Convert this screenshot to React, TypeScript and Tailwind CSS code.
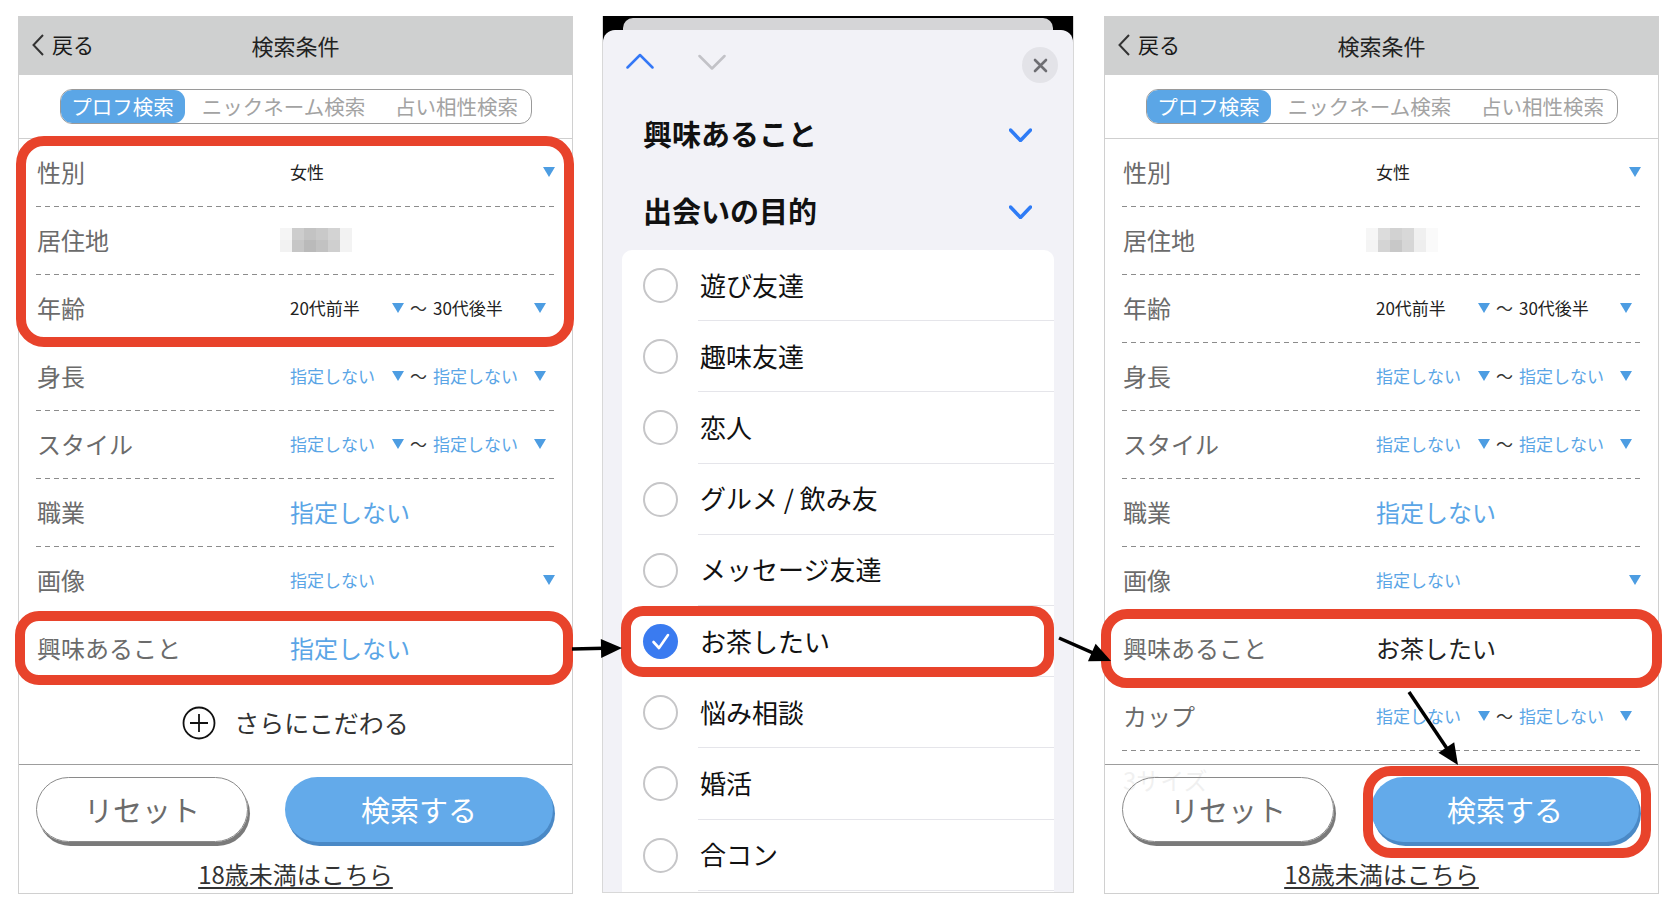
import { ReactNode } from 'react'

const RED = 'border-[#e8432b]'

function Tri() {
  return <span className="w-0 h-0 border-x-[6.5px] border-x-transparent border-t-[10px] border-t-[#4d9de2]" />
}

function Dashed() {
  return <div className="mx-[17px] h-px bg-[repeating-linear-gradient(90deg,#8c8c8c_0_5px,transparent_5px_9px)]" />
}

function Row({ label, children }: { label: string; children?: ReactNode }) {
  return (
    <div className="h-[68px] flex flex-col">
      <div className="flex-1 flex items-center pl-[18px] pr-[17px] pb-[2px]">
        <div className="w-[253px] text-[24px] text-[#6b6b6b]">{label}</div>
        <div className="flex-1 flex items-center">{children}</div>
      </div>
      <Dashed />
    </div>
  )
}

function Single({ value, blue }: { value: string; blue?: boolean }) {
  return (
    <div className="flex-1 flex items-center justify-between">
      <span className={blue ? 'text-[17px] text-[#5aa5e6]' : 'text-[17px] text-[#222]'}>{value}</span>
      <Tri />
    </div>
  )
}

function Range({ from, to, blue }: { from: string; to: string; blue?: boolean }) {
  const txt = blue ? 'text-[17px] text-[#5aa5e6]' : 'text-[17px] text-[#222]'
  return (
    <div className="flex items-center">
      <div className="w-[114px] flex items-center justify-between">
        <span className={txt}>{from}</span>
        <Tri />
      </div>
      <span className="w-[29px] text-center text-[17px] text-[#333]">〜</span>
      <div className="w-[113px] flex items-center justify-between">
        <span className={txt}>{to}</span>
        <Tri />
      </div>
    </div>
  )
}

function Pixels({ light }: { light?: boolean }) {
  const cells = light
    ? ['bg-[#f6f6f6]', 'bg-[#dcdcdc]', 'bg-[#d2d2d2]', 'bg-[#d8d8d8]', 'bg-[#f0f0f0]', 'bg-[#fafafa]',
       'bg-[#f4f4f4]', 'bg-[#d4d4d4]', 'bg-[#c8c8c8]', 'bg-[#d6d6d6]', 'bg-[#eeeeee]', 'bg-[#fafafa]']
    : ['bg-[#f5f5f5]', 'bg-[#cdcdcd]', 'bg-[#c3c3c3]', 'bg-[#c9c9c9]', 'bg-[#d3d3d3]', 'bg-[#f2f2f2]',
       'bg-[#f2f2f2]', 'bg-[#c6c6c6]', 'bg-[#bababa]', 'bg-[#c2c2c2]', 'bg-[#cfcfcf]', 'bg-[#f3f3f3]']
  return (
    <div className="-ml-[10px] grid grid-cols-6 w-[72px] h-[24px]">
      {cells.map((c, i) => (
        <div key={i} className={c} />
      ))}
    </div>
  )
}

function Header() {
  return (
    <div className="h-[58px] pb-[2px] bg-[#cfd0d0] grid grid-cols-[1fr_auto_1fr] items-center">
      <div className="flex items-center gap-[8px] pl-[13px]">
        <svg width="12" height="22" viewBox="0 0 12 22">
          <polyline points="11,1 1.5,11 11,21" fill="none" stroke="#333" strokeWidth="2" />
        </svg>
        <span className="text-[21px] text-[#1a1a1a]">戻る</span>
      </div>
      <div className="text-[22px] text-[#222]">検索条件</div>
      <div />
    </div>
  )
}

function Tabs() {
  return (
    <div className="h-[64px] border-b border-[#cfcfcf] flex items-center justify-center">
      <div className="flex h-[35px] rounded-[12px] border border-[#9a9a9a] overflow-hidden text-[20.5px]">
        <div className="w-[124px] rounded-[11px] bg-[#5ba6e6] text-white flex items-center justify-center">プロフ検索</div>
        <div className="w-[198px] text-[#a3a3a3] flex items-center justify-center">ニックネーム検索</div>
        <div className="w-[148px] text-[#a3a3a3] flex items-center justify-center">占い相性検索</div>
      </div>
    </div>
  )
}

function Footer({ highlight }: { highlight?: boolean }) {
  return (
    <div className="absolute inset-x-0 bottom-0 h-[129px] border-t border-[#9d9d9d] bg-white/90 flex flex-col items-center">
      <div className="mt-[12px] w-full flex pl-[17px] gap-[37px]">
        <button className="w-[212px] h-[65px] rounded-full border border-[#8a8a8a] shadow-[2px_4px_0_#7a7a7a] text-[29px] text-[#6b6b6b]">
          リセット
        </button>
        <div className="relative">
          <button className="w-[268px] h-[65px] rounded-full bg-[#63aaea] shadow-[2px_4px_0_#4a89c6] text-[29px] text-white">
            検索する
          </button>
          {highlight && (
            <div className={`absolute -top-[11px] -bottom-[16px] -left-[8px] -right-[12px] border-[10px] ${RED} rounded-[28px]`} />
          )}
        </div>
      </div>
      <a className="mt-[20px] text-[24px] leading-[24px] text-[#333] underline underline-offset-[3px]">18歳未満はこちら</a>
    </div>
  )
}

function BaseRows() {
  return (
    <>
      <Row label="身長">
        <Range from="指定しない" to="指定しない" blue />
      </Row>
      <Row label="スタイル">
        <Range from="指定しない" to="指定しない" blue />
      </Row>
      <Row label="職業">
        <span className="text-[24px] text-[#5aa5e6]">指定しない</span>
      </Row>
      <Row label="画像">
        <Single value="指定しない" blue />
      </Row>
    </>
  )
}

function LeftPanel() {
  return (
    <div className="w-[555px] h-[878px] border border-[#d0d0d0] relative flex flex-col bg-white">
      <Header />
      <Tabs />
      <div className="relative">
        <Row label="性別">
          <Single value="女性" />
        </Row>
        <Row label="居住地">
          <Pixels />
        </Row>
        <Row label="年齢">
          <Range from="20代前半" to="30代後半" />
        </Row>
        <div className={`absolute -top-[3px] -bottom-[4px] -left-[3px] -right-[2px] border-[10px] ${RED} rounded-[28px]`} />
      </div>
      <BaseRows />
      <div className="relative">
        <Row label="興味あること">
          <span className="text-[24px] text-[#5aa5e6]">指定しない</span>
        </Row>
        <div className={`absolute -top-[4px] -bottom-[2px] -left-[4px] -right-[1px] border-[10px] ${RED} rounded-[24px]`} />
      </div>
      <div className="h-[80px] flex items-center justify-center gap-[18px]">
        <svg width="34" height="34" viewBox="0 0 34 34">
          <circle cx="17" cy="17" r="15.5" fill="none" stroke="#111" strokeWidth="1.8" />
          <path d="M17 8v18M8 17h18" stroke="#111" strokeWidth="1.8" />
        </svg>
        <span className="text-[25px] text-[#333]">さらにこだわる</span>
      </div>
      <Footer />
    </div>
  )
}

function RightPanel() {
  return (
    <div className="w-[555px] h-[878px] border border-[#d0d0d0] relative flex flex-col bg-white">
      <Header />
      <Tabs />
      <Row label="性別">
        <Single value="女性" />
      </Row>
      <Row label="居住地">
        <Pixels light />
      </Row>
      <Row label="年齢">
        <Range from="20代前半" to="30代後半" />
      </Row>
      <BaseRows />
      <div className="relative">
        <Row label="興味あること">
          <span className="text-[24px] text-[#222]">お茶したい</span>
        </Row>
        <div className={`absolute -top-[6px] -bottom-[5px] -left-[4px] -right-[4px] border-[10px] ${RED} rounded-[26px]`} />
      </div>
      <div className="flex-1 overflow-hidden">
        <Row label="カップ">
          <Range from="指定しない" to="指定しない" blue />
        </Row>
        <div className="flex pt-[3px] pl-[18px]">
          <div className="w-[253px] h-[52px] flex items-center text-[24px] text-[#6b6b6b]">3サイズ</div>
        </div>
      </div>
      <Footer highlight />
    </div>
  )
}

const ITEMS = ['遊び友達', '趣味友達', '恋人', 'グルメ / 飲み友', 'メッセージ友達', 'お茶したい', '悩み相談', '婚活', '合コン']

function Chevron({ color, up, w, h, sw }: { color: string; up?: boolean; w: number; h: number; sw: number }) {
  const pts = up ? `1.5,${h - 1.5} ${w / 2},2 ${w - 1.5},${h - 1.5}` : `1.5,2 ${w / 2},${h - 1.5} ${w - 1.5},2`
  return (
    <svg width={w} height={h} viewBox={`0 0 ${w} ${h}`}>
      <polyline points={pts} fill="none" stroke={color} strokeWidth={sw} strokeLinecap="round" strokeLinejoin="round" />
    </svg>
  )
}

function MiddlePanel() {
  return (
    <div className="w-[472px] h-[877px] bg-black border-x border-b border-[#d8d8d8] flex flex-col">
      <div className="h-[14px] pt-[2px] px-[20px]">
        <div className="h-[12px] rounded-t-[10px] bg-[#d5d5d7]" />
      </div>
      <div className="flex-1 rounded-t-[12px] bg-[#f2f2f7] flex flex-col overflow-hidden">
        <div className="flex items-start pt-[23px] pl-[23px] pr-[15px]">
          <Chevron color="#3478f6" up w={28} h={16} sw={2.5} />
          <div className="ml-[44px] mt-[1px]">
            <Chevron color="#c2c2c7" w={28} h={16} sw={2.5} />
          </div>
          <div className="ml-auto -mt-[6px] w-[36px] h-[36px] rounded-full bg-[#e3e3e8] flex items-center justify-center">
            <svg width="15" height="15" viewBox="0 0 15 15">
              <path d="M2 2l11 11M13 2L2 13" stroke="#6e6e73" strokeWidth="2.6" strokeLinecap="round" />
            </svg>
          </div>
        </div>
        <div className="mt-[13px]">
          {['興味あること', '出会いの目的'].map((t) => (
            <div key={t} className="h-[77px] flex items-center justify-between pl-[40px] pr-[41px]">
              <span className="text-[29px] font-bold text-[#111] -mt-[2px]">{t}</span>
              <Chevron color="#2f7cf6" w={23} h={14} sw={3.5} />
            </div>
          ))}
        </div>
        <div className="mx-[19px] flex-1 bg-white rounded-t-[10px]">
          {ITEMS.map((t, i) => (
            <div key={t} className="relative h-[71.2px] flex items-center">
              <div className="pl-[21px]">
                {i === 5 ? (
                  <div className="w-[35px] h-[35px] rounded-full bg-[#3a7bf0] flex items-center justify-center">
                    <svg width="35" height="35" viewBox="0 0 35 35">
                      <polyline points="10.5,18 16,24 25,11" fill="none" stroke="#fff" strokeWidth="2.6" strokeLinecap="round" strokeLinejoin="round" />
                    </svg>
                  </div>
                ) : (
                  <div className="w-[35px] h-[35px] rounded-full border-2 border-[#c6c6c8]" />
                )}
              </div>
              <div className="ml-[20px] pl-[2px] pb-[2px] flex-1 h-full flex items-center border-b border-[#e5e5ea] text-[26px] text-[#111]">
                {t}
              </div>
              {i === 5 && (
                <div className={`absolute -left-px right-0 top-0 bottom-0 border-[10px] ${RED} rounded-[22px]`} />
              )}
            </div>
          ))}
        </div>
      </div>
    </div>
  )
}

function Arrow({ x1, y1, x2, y2 }: { x1: number; y1: number; x2: number; y2: number }) {
  const dx = x2 - x1
  const dy = y2 - y1
  const len = Math.hypot(dx, dy)
  const ux = dx / len
  const uy = dy / len
  const head = 21
  const half = 9.5
  const bx = x2 - ux * head
  const by = y2 - uy * head
  const pts = `${x2},${y2} ${bx - uy * half},${by + ux * half} ${bx + uy * half},${by - ux * half}`
  return (
    <g>
      <line x1={x1} y1={y1} x2={bx + ux * 3} y2={by + uy * 3} stroke="#000" strokeWidth="3.5" />
      <polygon points={pts} fill="#000" />
    </g>
  )
}

export default function App() {
  return (
    <div className="relative w-[1676px] h-[906px] bg-white overflow-hidden font-['Noto_Sans_CJK_JP','Noto_Sans',sans-serif]">
      <div className="flex items-start pt-[16px] pl-[18px]">
        <LeftPanel />
        <div className="ml-[29px]">
          <MiddlePanel />
        </div>
        <div className="ml-[30px]">
          <RightPanel />
        </div>
      </div>
      <svg className="absolute inset-0 pointer-events-none" width="1676" height="906">
        <Arrow x1={572} y1={649} x2={622} y2={648} />
        <Arrow x1={1059} y1={638} x2={1111} y2={661} />
        <Arrow x1={1409} y1={692} x2={1458} y2={765} />
      </svg>
    </div>
  )
}
